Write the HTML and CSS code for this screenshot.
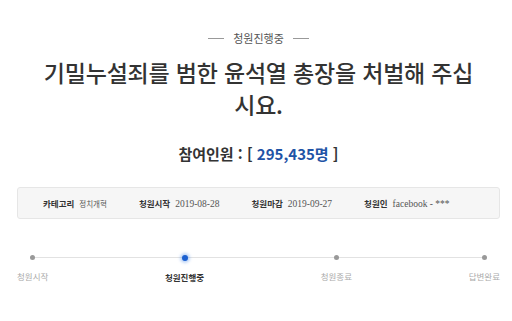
FILE: index.html
```html
<!DOCTYPE html>
<html lang="ko">
<head>
<meta charset="utf-8">
<link rel="stylesheet" href="styles.css">
</head>
<body>
<div class="page">
  <div class="status"><span class="dash"></span><span>청원진행중</span><span class="dash"></span></div>
  <h1 class="title">기밀누설죄를 범한 윤석열 총장을 처벌해 주십<br>시요.</h1>
  <div class="count">참여인원 : [ <span class="num">295,435명</span> ]</div>
  <div class="info">
    <div class="item"><span class="lbl">카테고리</span><span class="val val-ko">정치개혁</span></div>
    <div class="item"><span class="lbl">청원시작</span><span class="val">2019-08-28</span></div>
    <div class="item"><span class="lbl">청원마감</span><span class="val">2019-09-27</span></div>
    <div class="item"><span class="lbl">청원인</span><span class="val">facebook - ***</span></div>
  </div>
  <div class="steps">
    <div class="step"><span class="dot"></span><span class="step-lbl">청원시작</span></div>
    <div class="step active"><span class="dot"></span><span class="step-lbl">청원진행중</span></div>
    <div class="step"><span class="dot"></span><span class="step-lbl">청원종료</span></div>
    <div class="step"><span class="dot"></span><span class="step-lbl">답변완료</span></div>
  </div>
</div>
</body>
</html>
```

FILE: styles.css
```css
* { box-sizing: border-box; }
html, body { margin: 0; padding: 0; background: #fff; }
body {
  font-family: "Noto Sans CJK KR", "Noto Sans", sans-serif;
  color: #333;
}
.page {
  padding: 31px 12px 0 17px;
}
.status {
  display: flex;
  justify-content: center;
  align-items: center;
  gap: 9px;
  font-size: 11px;
  line-height: 14px;
  color: #555;
}
.dash {
  width: 16px;
  height: 1px;
  background: #999;
}
.title {
  margin: 11px 0 0;
  text-align: center;
  font-size: 23px;
  line-height: 32px;
  font-weight: 500;
  letter-spacing: -0.2px;
  color: #333;
}
.count {
  margin-top: 24px;
  text-align: center;
  font-size: 15px;
  line-height: 20px;
  font-weight: 700;
  color: #333;
}
.num { color: #1f54a6; }
.info {
  margin-top: 23px;
  height: 32px;
  display: flex;
  align-items: center;
  gap: 32px;
  padding-left: 25px;
  background: #f6f6f6;
  border: 1px solid #e6e6e6;
  border-radius: 3px;
}
.item {
  display: flex;
  align-items: baseline;
  gap: 5px;
}
.lbl {
  font-size: 8.5px;
  font-weight: 700;
  color: #333;
}
.val {
  font-family: "Liberation Serif", serif;
  font-size: 9.5px;
  color: #555;
}
.val-ko {
  font-family: "Noto Sans CJK KR", sans-serif;
  font-size: 7.5px;
}
.steps {
  position: relative;
  margin-top: 36px;
  display: flex;
  justify-content: space-between;
}
.steps::before {
  content: "";
  position: absolute;
  left: 16px;
  right: 16px;
  top: 2px;
  height: 1px;
  background: #e2e2e2;
}
.step {
  position: relative;
  display: flex;
  flex-direction: column;
  align-items: center;
  gap: 10px;
}
.dot {
  width: 5px;
  height: 5px;
  border-radius: 50%;
  background: #999;
}
.step-lbl {
  font-size: 8.5px;
  line-height: 12px;
  color: #aaa;
}
.active .dot {
  width: 6px;
  height: 6px;
  margin-top: -0.5px;
  background: #1a5fd0;
  box-shadow: 0 0 3px 2px rgba(60, 130, 230, 0.35);
}
.active .step-lbl {
  color: #333;
  font-weight: 700;
}
```
